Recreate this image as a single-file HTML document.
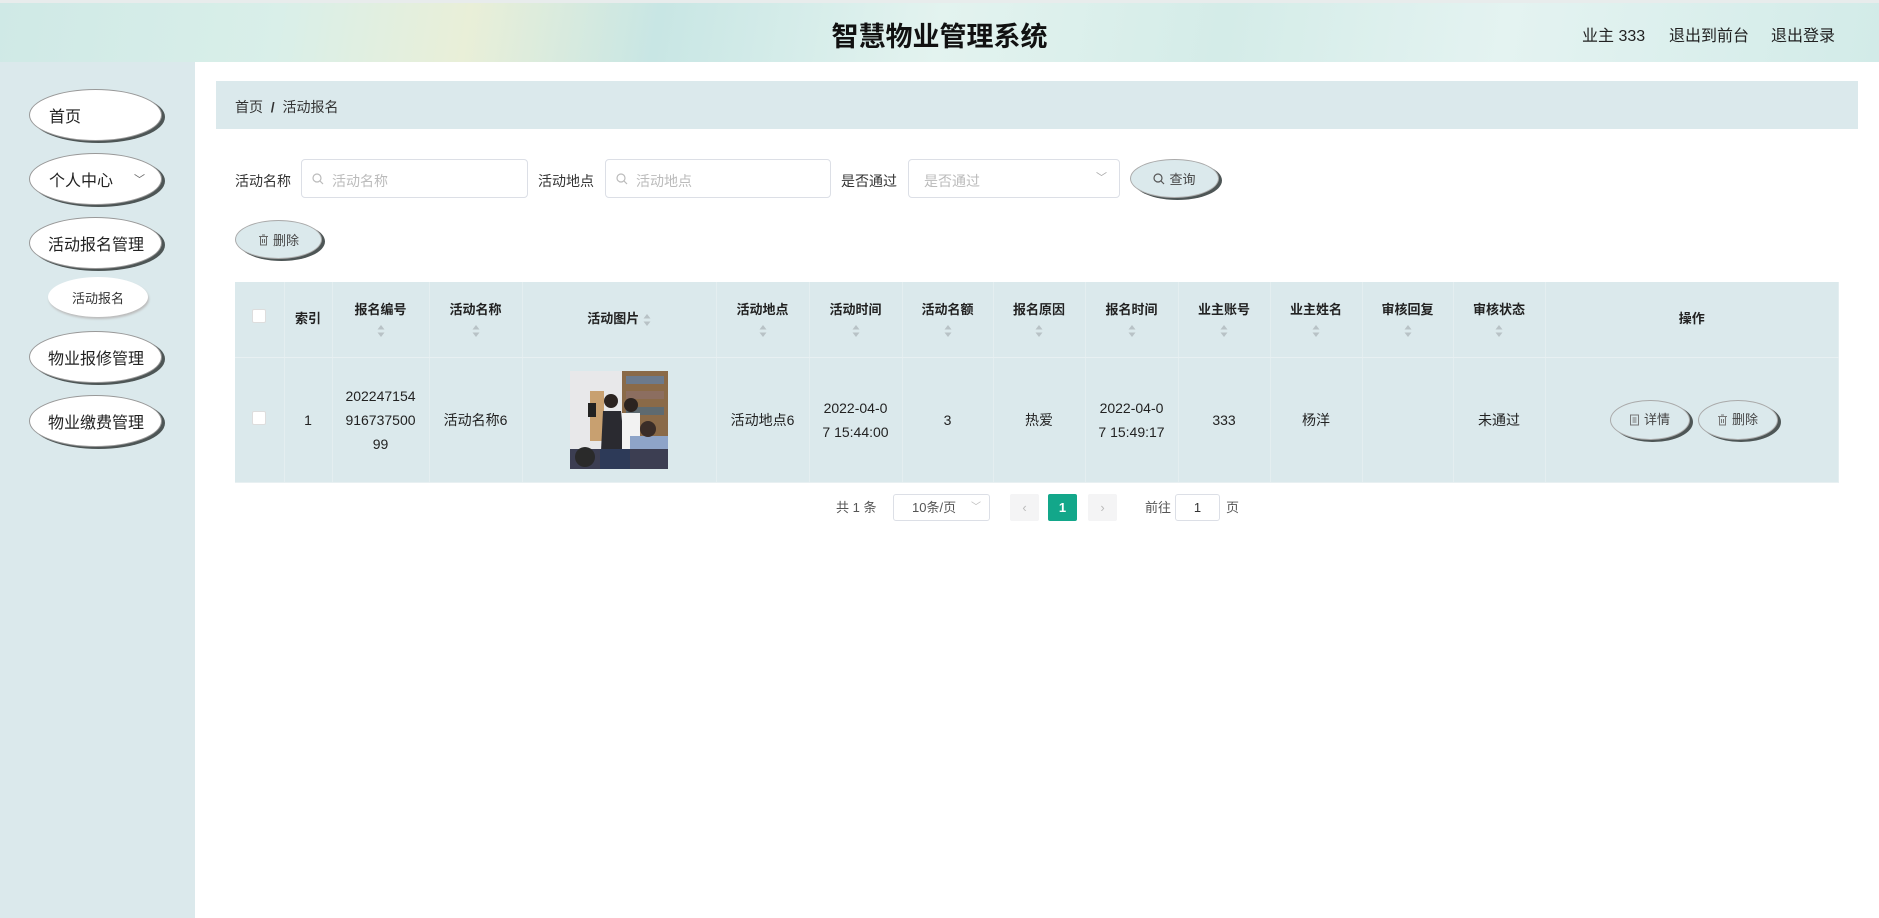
<!DOCTYPE html>
<html><head><meta charset="utf-8"><style>
*{box-sizing:border-box;margin:0;padding:0}
body{width:1879px;height:918px;overflow:hidden;font-family:"Liberation Sans","Noto Sans CJK SC",sans-serif;color:#333;background:#fff;position:relative;font-size:14px}
.abs{position:absolute}
#hdr{left:0;top:0;width:1879px;height:62px;border-top:3px solid #e8ecec;background:linear-gradient(100deg,#cfe9e6 0%,#d9efe9 15%,#e9efd8 25%,#c8e6e4 35%,#e3f3ef 50%,#d4ece8 65%,#e4f3f1 80%,#d2ebe8 100%)}
#title{left:0;width:1879px;top:15px;text-align:center;font-size:27px;font-weight:bold;color:#111}
.hl{top:22px;font-size:16px;color:#222}
#side{left:0;top:62px;width:195px;height:856px;background:#dbe9ec}
.pill{position:absolute;background:#fff;border-radius:50%;border:1px solid #999;box-shadow:3px 2px 0 0 #4e5656;font-size:16px;color:#222;display:flex;align-items:center;padding-left:19px}
.sub{position:absolute;background:#fff;border-radius:50%;box-shadow:1px 2px 2px #bbb;font-size:13px;display:flex;align-items:center;justify-content:center}
#bc{left:216px;top:81px;width:1642px;height:48px;background:#dbe9ec;font-size:14px;padding:16px 19px;color:#333}
.lab{font-size:14px;color:#333;top:171px}
.inp{position:absolute;border:1px solid #dcdfe6;border-radius:4px;height:39px;top:159px;background:#fff;color:#bbb;font-size:14px;padding:11px 0 0 30px}
.inp svg{position:absolute;left:10px;top:13px}
.eb{position:absolute;border-radius:50%;background:#dbe9ec;border:1px solid #aaa;box-shadow:3px 2px 0 0 #4e5656;font-size:13px;color:#444;display:flex;align-items:center;justify-content:center;gap:4px}
table{position:absolute;left:235px;top:282px;width:1604px;border-collapse:collapse;background:#dbe9ec;font-size:14px}
th,td{border-right:1px solid #e4eef0;border-bottom:1px solid #e8f0f2;text-align:center;color:#222}
th{height:75px;font-weight:bold;font-size:13px;line-height:20px}
td{height:125px;line-height:24px}
.sort{display:block;margin:4px auto 0;width:8px;height:14px}
.cb{display:inline-block;width:14px;height:14px;background:#fff;border:1px solid #ddd;border-radius:2px}
.pg{position:absolute;top:494px;height:27px;font-size:13px;color:#555}
</style></head><body>
<div id="hdr" class="abs"></div>
<div id="title" class="abs">智慧物业管理系统</div>
<div class="abs hl" style="left:1582px">业主 333</div>
<div class="abs hl" style="left:1669px">退出到前台</div>
<div class="abs hl" style="left:1771px">退出登录</div>

<div id="side" class="abs"></div>
<div class="pill" style="left:29px;top:89px;width:133px;height:52px">首页</div>
<div class="pill" style="left:29px;top:153px;width:133px;height:52px">个人中心<span style="position:absolute;right:16px;font-size:11px;color:#666">﹀</span></div>
<div class="pill" style="left:29px;top:217px;width:133px;height:52px;padding-left:18px">活动报名管理</div>
<div class="sub" style="left:48px;top:277px;width:100px;height:40px">活动报名</div>
<div class="pill" style="left:29px;top:331px;width:133px;height:52px;padding-left:18px">物业报修管理</div>
<div class="pill" style="left:29px;top:395px;width:133px;height:52px;padding-left:18px">物业缴费管理</div>

<div id="bc" class="abs">首页 &nbsp;<b>/</b>&nbsp; 活动报名</div>

<div class="abs lab" style="left:235px">活动名称</div>
<div class="inp" style="left:301px;width:227px"><svg width="12" height="12" viewBox="0 0 12 12"><circle cx="5" cy="5" r="4" fill="none" stroke="#bbb" stroke-width="1.2"/><path d="M8 8l3 3" stroke="#bbb" stroke-width="1.2"/></svg>活动名称</div>
<div class="abs lab" style="left:538px">活动地点</div>
<div class="inp" style="left:605px;width:226px"><svg width="12" height="12" viewBox="0 0 12 12"><circle cx="5" cy="5" r="4" fill="none" stroke="#bbb" stroke-width="1.2"/><path d="M8 8l3 3" stroke="#bbb" stroke-width="1.2"/></svg>活动地点</div>
<div class="abs lab" style="left:841px">是否通过</div>
<div class="inp" style="left:908px;width:212px;padding-left:15px">是否通过<span style="position:absolute;right:12px;top:9px;font-size:11px;color:#aaa">﹀</span></div>
<div class="eb" style="left:1130px;top:159px;width:89px;height:39px"><svg width="12" height="12" viewBox="0 0 12 12"><circle cx="5" cy="5" r="4" fill="none" stroke="#555" stroke-width="1.2"/><path d="M8 8l3 3" stroke="#555" stroke-width="1.2"/></svg>查询</div>
<div class="eb" style="left:235px;top:220px;width:87px;height:39px"><svg width="11" height="12" viewBox="0 0 11 12"><path d="M1 2.5h9M4 1h3M2.5 2.5v8.5h6V2.5M4.5 5v4M6.5 5v4" fill="none" stroke="#666"/></svg>删除</div>

<table>
<colgroup><col style="width:49px"><col style="width:48px"><col style="width:97px"><col style="width:93px"><col style="width:194px"><col style="width:93px"><col style="width:93px"><col style="width:91px"><col style="width:92px"><col style="width:93px"><col style="width:92px"><col style="width:92px"><col style="width:91px"><col style="width:92px"><col></colgroup>
<tr><th><span class="cb"></span></th><th>索引</th>
<th>报名编号<svg class="sort" viewBox="0 0 8 14"><path d="M4 1l3.5 4.5h-7zM4 13l3.5-4.5h-7z" fill="#b8c2c6"/></svg></th>
<th>活动名称<svg class="sort" viewBox="0 0 8 14"><path d="M4 1l3.5 4.5h-7zM4 13l3.5-4.5h-7z" fill="#b8c2c6"/></svg></th>
<th>活动图片 <svg width="8" height="14" viewBox="0 0 8 14" style="vertical-align:middle"><path d="M4 1l3.5 4.5h-7zM4 13l3.5-4.5h-7z" fill="#b8c2c6"/></svg></th>
<th>活动地点<svg class="sort" viewBox="0 0 8 14"><path d="M4 1l3.5 4.5h-7zM4 13l3.5-4.5h-7z" fill="#b8c2c6"/></svg></th>
<th>活动时间<svg class="sort" viewBox="0 0 8 14"><path d="M4 1l3.5 4.5h-7zM4 13l3.5-4.5h-7z" fill="#b8c2c6"/></svg></th>
<th>活动名额<svg class="sort" viewBox="0 0 8 14"><path d="M4 1l3.5 4.5h-7zM4 13l3.5-4.5h-7z" fill="#b8c2c6"/></svg></th>
<th>报名原因<svg class="sort" viewBox="0 0 8 14"><path d="M4 1l3.5 4.5h-7zM4 13l3.5-4.5h-7z" fill="#b8c2c6"/></svg></th>
<th>报名时间<svg class="sort" viewBox="0 0 8 14"><path d="M4 1l3.5 4.5h-7zM4 13l3.5-4.5h-7z" fill="#b8c2c6"/></svg></th>
<th>业主账号<svg class="sort" viewBox="0 0 8 14"><path d="M4 1l3.5 4.5h-7zM4 13l3.5-4.5h-7z" fill="#b8c2c6"/></svg></th>
<th>业主姓名<svg class="sort" viewBox="0 0 8 14"><path d="M4 1l3.5 4.5h-7zM4 13l3.5-4.5h-7z" fill="#b8c2c6"/></svg></th>
<th>审核回复<svg class="sort" viewBox="0 0 8 14"><path d="M4 1l3.5 4.5h-7zM4 13l3.5-4.5h-7z" fill="#b8c2c6"/></svg></th>
<th>审核状态<svg class="sort" viewBox="0 0 8 14"><path d="M4 1l3.5 4.5h-7zM4 13l3.5-4.5h-7z" fill="#b8c2c6"/></svg></th>
<th>操作</th></tr>
<tr><td><span class="cb"></span></td><td>1</td><td>202247154<br>916737500<br>99</td><td>活动名称6</td>
<td><svg width="98" height="98" viewBox="0 0 98 98" style="vertical-align:middle"><rect width="98" height="98" fill="#e8e8ea"/><rect x="52" y="0" width="46" height="75" fill="#8a6a48"/><rect x="56" y="5" width="38" height="8" fill="#6c7a8c"/><rect x="56" y="20" width="38" height="8" fill="#8c6e60"/><rect x="56" y="36" width="38" height="8" fill="#5e6a70"/><rect x="20" y="20" width="14" height="50" fill="#c8a070"/><rect x="18" y="32" width="8" height="14" fill="#222"/><path d="M33 40h18l4 40h-24z" fill="#2a2a30"/><circle cx="41" cy="30" r="7" fill="#2b2320"/><path d="M52 42h18v36H52z" fill="#f2f2f2"/><circle cx="61" cy="34" r="7" fill="#2b2320"/><path d="M60 65h38v33H60z" fill="#8ea4c8"/><circle cx="78" cy="58" r="8" fill="#3a2d28"/><path d="M0 78h98v20H0z" fill="#3c3e52"/><circle cx="15" cy="86" r="10" fill="#2a2a2a"/><path d="M30 78h30v20H30z" fill="#2d3a58"/></svg></td>
<td>活动地点6</td><td>2022-04-0<br>7 15:44:00</td><td>3</td><td>热爱</td><td>2022-04-0<br>7 15:49:17</td><td>333</td><td>杨洋</td><td></td><td>未通过</td>
<td><div style="position:relative;height:40px"><div class="eb" style="left:64px;top:0;width:80px;height:40px"><svg width="11" height="12" viewBox="0 0 11 12"><path d="M1.5 1h8v10h-8zM3.5 4h4M3.5 6h4M3.5 8h4" fill="none" stroke="#777"/></svg>详情</div><div class="eb" style="left:152px;top:0;width:80px;height:40px"><svg width="11" height="12" viewBox="0 0 11 12"><path d="M1 2.5h9M4 1h3M2.5 2.5v8.5h6V2.5M4.5 5v4M6.5 5v4" fill="none" stroke="#777"/></svg>删除</div></div></td></tr>
</table>

<div class="pg" style="left:836px;line-height:27px">共 1 条</div>
<div class="pg" style="left:893px;width:97px;border:1px solid #dcdfe6;border-radius:3px;line-height:25px;padding-left:18px">10条/页<span style="position:absolute;right:8px;font-size:10px;color:#bbb">﹀</span></div>
<div class="pg" style="left:1010px;width:29px;background:#f4f4f5;border-radius:2px;text-align:center;line-height:27px;color:#bbb">‹</div>
<div class="pg" style="left:1048px;width:29px;background:#13a78a;border-radius:2px;text-align:center;line-height:27px;color:#fff;font-weight:bold">1</div>
<div class="pg" style="left:1088px;width:29px;background:#f4f4f5;border-radius:2px;text-align:center;line-height:27px;color:#bbb">›</div>
<div class="pg" style="left:1145px;line-height:27px">前往</div>
<div class="pg" style="left:1175px;width:45px;border:1px solid #dcdfe6;border-radius:3px;text-align:center;line-height:25px;color:#333">1</div>
<div class="pg" style="left:1226px;line-height:27px">页</div>
</body></html>
